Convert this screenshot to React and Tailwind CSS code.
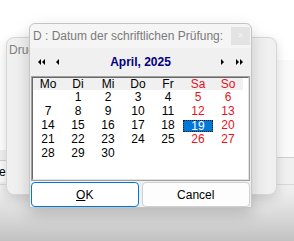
import React from "react";

const days = [
  ["", "1", "2", "3", "4", "5", "6"],
  ["7", "8", "9", "10", "11", "12", "13"],
  ["14", "15", "16", "17", "18", "19", "20"],
  ["21", "22", "23", "24", "25", "26", "27"],
  ["28", "29", "30", "", "", "", ""],
];
const heads = ["Mo", "Di", "Mi", "Do", "Fr", "Sa", "So"];

function Tri({ dir = "left", double = false }) {
  const one = (dx) =>
    dir === "left" ? (
      <polygon key={dx} points={`${dx + 3},0 ${dx + 3},6 ${dx},3`} fill="#000" />
    ) : (
      <polygon key={dx} points={`${dx},0 ${dx},6 ${dx + 3},3`} fill="#000" />
    );
  return (
    <svg width={double ? 7 : 4} height="6" viewBox={`0 0 ${double ? 7 : 4} 6`} className="block">
      {double ? [one(0), one(4)] : one(0)}
    </svg>
  );
}

export default function App() {
  return (
    <div className="relative w-[294px] h-[241px] overflow-hidden bg-[linear-gradient(to_bottom,#ffffff_0%,#ffffff_62%,#ececec_80%,#d4d4d4_92%,#c2c2c2_100%)] font-['Liberation_Sans',Arial,sans-serif] text-[12px] text-black">
      {/* left background window */}
      <div className="absolute left-[-40px] top-[150px] w-[46px] h-[35px] bg-[#f0f0f0] border-b border-[#d9d9d9]">
        <div className="mt-[10px] h-[22px] bg-[#fafafa] border-t border-[#cfcfcf] pl-[39px] leading-[22px] text-[12px]">e</div>
      </div>
      {/* right background window */}
      <div className="absolute left-[277px] top-[60px] w-[40px] h-[125px] bg-[#fafafa] border-b border-[#d9d9d9]">
        <div className="mt-[93px] h-[5px] border-b border-[#cfcfcf]" />
        <div className="h-[26px] bg-[#f0f0f0]" />
      </div>
      {/* back window */}
      <div className="absolute left-[6px] top-[37px] w-[271px] h-[158px] rounded-[8px] bg-[#f0f0f0] border border-[#d6d6d6] shadow-[0_4px_12px_rgba(0,0,0,0.15)]">
        <div className="pl-[2px] pt-[4px] text-[12px] text-[#808080] leading-[16px]">Drucken</div>
      </div>
      {/* main dialog */}
      <div className="absolute left-[29px] top-[23px] w-[223px] h-[185px] rounded-t-[6px] bg-[#f0f0f0] border border-[#c4c4c4] shadow-[0_6px_16px_rgba(0,0,0,0.18)] flex flex-col">
        <div className="h-[24px] flex items-center justify-between pl-[3px] pr-[1px] bg-[#f5f5f5] rounded-t-[6px]">
          <span className="text-[12px] leading-[16px] text-[#7a7a7a] whitespace-nowrap">D : Datum der schriftlichen Prüfung:</span>
          <div className="w-[19px] h-[18px] bg-[#e3e3e3] flex items-center justify-center text-[10px] leading-[10px] text-[#f4f4f4]">×</div>
        </div>
        <div className="h-[28px] flex items-center px-[8px]">
          <Tri dir="left" double />
          <span className="ml-[11px]"><Tri dir="left" /></span>
          <span className="flex-1 text-center font-bold text-[#000080] text-[12px] leading-[16px]">April, 2025</span>
          <span className="mr-[11px]"><Tri dir="right" /></span>
          <Tri dir="right" double />
        </div>
        <div className="mx-[1px] h-[105px] border border-[#a0a0a0] bg-white">
          <div className="h-full border border-[#696969] border-r-[#e3e3e3] border-b-[#e3e3e3]">
            <div className="grid grid-cols-[repeat(7,30px)] h-[12px] bg-[#f0f0f0] w-[210px] leading-[12px]">
              {heads.map((h, i) => (
                <div key={h} className={`text-center ${i >= 5 ? "text-[#e81123]" : ""}`}>{h}</div>
              ))}
            </div>
            {days.map((row, r) => (
              <div key={r} className="grid grid-cols-[repeat(7,30px)] h-[14px] w-[210px] leading-[14px]">
                {row.map((d, i) =>
                  d === "19" ? (
                    <div key={i} className="flex items-end h-[14px]">
                      <div className="w-[30px] h-[12px] leading-[12px] text-center bg-[#0078d7] text-white outline-1 outline-dotted outline-[#1a1a1a] outline-offset-[-1px]">19</div>
                    </div>
                  ) : (
                    <div key={i} className={`text-center ${i >= 5 ? "text-[#e81123]" : ""}`}>{d}</div>
                  )
                )}
              </div>
            ))}
          </div>
        </div>
        <div className="flex gap-[3px] mt-[1px] mx-[1px]">
          <button className="w-[108px] h-[25px] rounded-[4px] border border-[#0078d7] bg-white text-[12px]"><span className="underline">O</span>K</button>
          <button className="w-[109px] h-[25px] rounded-[4px] border border-[#d0d0d0] bg-[#fdfdfd] text-[12px]">Cancel</button>
        </div>
      </div>
    </div>
  );
}
